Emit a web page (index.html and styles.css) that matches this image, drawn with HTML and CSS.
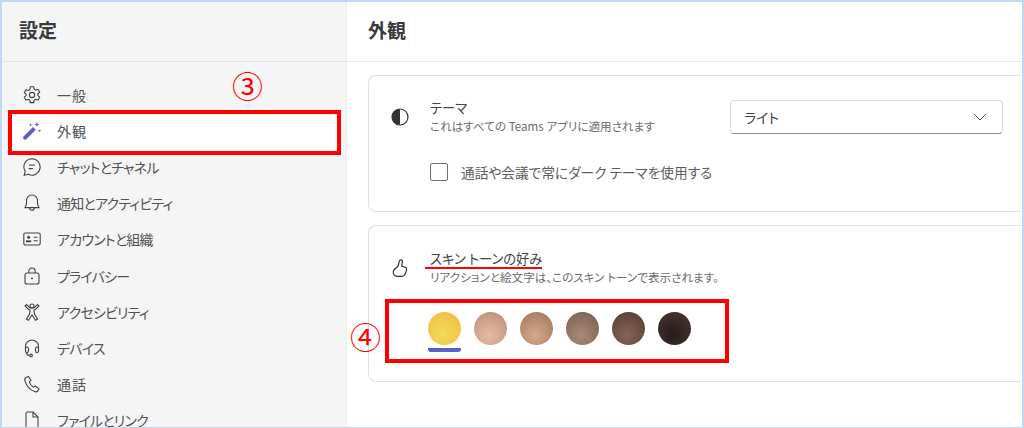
FILE: index.html
```html
<!DOCTYPE html>
<html lang="ja">
<head>
  <meta charset="UTF-8">
  <title>設定</title>
  <link rel="stylesheet" href="styles.css">
</head>
<body>
  <div class="window">
    <aside class="sidebar">
      <div class="sidebar-head">設定</div>
      <nav class="nav">
        <div class="nav-item">
          <svg class="icon" viewBox="0 0 20 20"><path d="M8.300 1.800h3.400l.5 2.400 1.500.9 2.300-.8 1.700 2.900-1.800 1.600v1.800l1.800 1.600-1.700 2.900-2.300-.8-1.500.9-.5 2.400H8.300l-.5-2.400-1.500-.9-2.300.8-1.700-2.900 1.800-1.600V9.200L2.300 7.600 4 4.700l2.300.8 1.500-.9z"/><circle cx="10" cy="10" r="2.600"/></svg>
          <span class="wide">一般</span>
        </div>
        <div class="nav-item nav-item-active">
          <svg class="icon" viewBox="0 0 20 20"><path class="wand" d="M1.500 15.500 11 6l2.800 2.800-9.500 9.500a2 2 0 0 1-2.800-2.800z"/><path class="spark" d="M14.800 1l.7 1.800 1.800.7-1.800.7-.7 1.800-.7-1.800-1.800-.7 1.800-.7zM17.600 8.200l.5 1.100 1.100.5-1.100.5-.5 1.100-.5-1.100-1.100-.5 1.100-.5zM8.600 2.400l.5 1.100 1.100.5-1.100.5-.5 1.100-.5-1.100L7 4l1.100-.5z"/></svg>
          <span class="wide">外観</span>
        </div>
        <div class="nav-item">
          <svg class="icon" viewBox="0 0 20 20"><path d="M10 1.800a8.200 8.200 0 1 1-3.800 15.500l-4 .9 1-3.800A8.200 8.200 0 0 1 10 1.800z"/><path d="M6.800 8h6.400M6.800 11.600h4"/></svg>
          <span>チャットとチャネル</span>
        </div>
        <div class="nav-item">
          <svg class="icon" viewBox="0 0 20 20"><path d="M10 2a5.500 5.500 0 0 0-5.500 5.500v3.500L3 14.600h14L15.500 11V7.500A5.500 5.500 0 0 0 10 2z"/><path d="M7.600 14.800a2.400 2.400 0 0 0 4.800 0"/></svg>
          <span>通知とアクティビティ</span>
        </div>
        <div class="nav-item">
          <svg class="icon" viewBox="0 0 20 20"><rect x="1.800" y="4" width="16.400" height="12" rx="1.600"/><circle class="fill" cx="6.600" cy="8.200" r="1.500"/><path class="fill" d="M4 11.400h5.200v1.800H4z"/><path d="M11.600 8.200h4M11.600 11.800h4"/></svg>
          <span>アカウントと組織</span>
        </div>
        <div class="nav-item">
          <svg class="icon" viewBox="0 0 20 20"><rect x="3" y="7" width="14" height="11" rx="2"/><path d="M6.800 7V5.200a3.200 3.200 0 0 1 6.400 0V7"/><circle class="fill" cx="10" cy="12.500" r="1"/></svg>
          <span>プライバシー</span>
        </div>
        <div class="nav-item">
          <svg class="icon" viewBox="0 0 20 20"><circle cx="10" cy="4" r="2"/><path d="M3 3.800c1.500 2 3.500 3.600 5 4.200l-.5 4-3 5 2 1.200L10 13l3.500 5.200 2-1.200-3-5-.5-4c1.500-.6 3.500-2.200 5-4.200l-1.600-1.200C14 4.400 12 6 10 6S6 4.400 4.600 2.600z"/></svg>
          <span>アクセシビリティ</span>
        </div>
        <div class="nav-item">
          <svg class="icon" viewBox="0 0 20 20"><path d="M3.500 11V8.500a6.500 6.500 0 0 1 13 0V11"/><rect x="3.500" y="9" width="3" height="5.600" rx="1.500"/><rect x="13.500" y="9" width="3" height="5.600" rx="1.500"/><path d="M4.500 14.600c0 2.200 1.200 3 3 3"/><circle cx="9" cy="17.400" r="1.300"/></svg>
          <span>デバイス</span>
        </div>
        <div class="nav-item">
          <svg class="icon" viewBox="0 0 20 20"><path d="M6.400 2.400 4 3.400C2.800 4 2.600 5.400 3 6.800c1.400 5 5 9 9.800 10.800 1.400.5 2.600 0 3.200-1l1-1.800-3.600-2.800-2 1.200C9.600 12.200 8 10 7.400 7.800l1.600-1.600z"/></svg>
          <span class="wide">通話</span>
        </div>
        <div class="nav-item">
          <svg class="icon" viewBox="0 0 20 20"><path d="M4 18V3.500A1.500 1.500 0 0 1 5.500 2H11l5 5v11A1.500 1.500 0 0 1 14.500 19.500h-9A1.500 1.500 0 0 1 4 18z"/><path d="M11 2v5h5"/></svg>
          <span>ファイルとリンク</span>
        </div>
      </nav>
    </aside>

    <main class="main">
      <div class="main-head">外観</div>
      <div class="cards">
        <section class="card card-theme">
          <div class="card-row">
            <svg class="card-icon" viewBox="0 0 20 20"><circle class="plain" cx="10" cy="10" r="8"/><path class="solid" d="M10 2a8 8 0 0 0 0 16z"/></svg>
            <div class="card-text">
              <div class="card-title">テーマ</div>
              <div class="card-sub">これはすべての Teams アプリに適用されます</div>
            </div>
            <div class="select">
              <span>ライト</span>
              <svg class="chevron" viewBox="0 0 14 8"><path d="M1 1l6 6 6-6"/></svg>
            </div>
          </div>
          <label class="check-row">
            <span class="checkbox"></span>
            <span>通話や会議で常にダーク テーマを使用する</span>
          </label>
        </section>

        <section class="card card-skin">
          <div class="card-row">
            <svg class="card-icon" viewBox="0 0 20 20"><path class="plain" d="M11.200 1.800c1 0 1.400 1 1.200 2.200l-.7 4 3.300 1.200c1.400.5 2 1.800 1.500 3.200l-1 3c-.7 2-2.300 3-4.500 3H8c-2.800 0-4.800-1.800-4.800-4.200 0-1.400.6-2.400 1.800-3.400l2.200-1.800c.8-.8 1.200-1.600 1.500-3l.5-2.400c.2-1.200 1-1.800 2-1.800z"/></svg>
            <div class="card-text">
              <div class="card-title">スキン トーンの好み</div>
              <div class="card-sub">リアクションと絵文字は、このスキン トーンで表示されます。</div>
            </div>
          </div>
          <div class="swatches">
            <div class="swatch swatch-on"><span class="tone tone-1"></span></div>
            <div class="swatch"><span class="tone tone-2"></span></div>
            <div class="swatch"><span class="tone tone-3"></span></div>
            <div class="swatch"><span class="tone tone-4"></span></div>
            <div class="swatch"><span class="tone tone-5"></span></div>
            <div class="swatch"><span class="tone tone-6"></span></div>
          </div>
        </section>
      </div>
    </main>

    <!-- red annotations drawn over the screenshot -->
    <div class="mark mark-nav"></div>
    <div class="mark mark-tones"></div>
    <div class="mark-line"></div>
    <div class="step step-3">③</div>
    <div class="step step-4">④</div>
  </div>
</body>
</html>
```

FILE: styles.css
```css
* {
  box-sizing: border-box;
}

body {
  margin: 0;
  background-color: #fff;
  font-family: "Noto Sans CJK JP", "Noto Sans", sans-serif;
  font-feature-settings: "palt";
  color: #424242;
}

.window {
  position: relative;
  display: flex;
  width: 1024px;
  height: 428px;
  overflow: hidden;
  border: 2px solid #bcd9f6;
  border-bottom-width: 1px;
}

/* sidebar */
.sidebar {
  flex: none;
  width: 345px;
  background-color: #f5f5f5;
  border-right: 1px solid #ededed;
}

.sidebar-head {
  height: 60px;
  padding: 14px 0 0 17px;
  font-size: 19px;
  line-height: 28px;
  font-weight: 700;
  color: #3a3a3a;
  border-bottom: 1px solid #e4e4e4;
}

.nav {
  padding-top: 15px;
}

.nav-item {
  display: flex;
  align-items: center;
  height: 36.100px;
  padding-left: 20px;
  font-size: 14px;
  letter-spacing: -0.8px;
  color: #525252;
}

.nav-item span {
  margin-left: 15px;
}

.nav-item .wide {
  letter-spacing: 1px;
}

.nav-item-active {
  position: relative;
  z-index: 1;
}

.icon {
  flex: none;
  width: 20px;
  height: 20px;
  fill: none;
  stroke: #424242;
  stroke-width: 1.100;
}

.icon .fill {
  fill: #424242;
  stroke: none;
}

.icon .wand {
  fill: #5b5fc7;
  stroke: none;
}

.icon .spark {
  fill: #5b5fc7;
  stroke: none;
}

/* main */
.main {
  flex: 1;
  min-width: 0;
  background-color: #fff;
}

.main-head {
  height: 60px;
  padding: 14px 0 0 21px;
  font-size: 19px;
  line-height: 28px;
  font-weight: 700;
  color: #3a3a3a;
  border-bottom: 1px solid #e8e8e8;
}

.cards {
  display: flex;
  flex-direction: column;
  gap: 13px;
  padding: 13px 0 0 21px;
}

.card {
  border: 1px solid #e0e0e0;
  border-right: none;
  border-radius: 8px 0 0 8px;
  background-color: #fff;
}

.card-theme {
  height: 137px;
  padding: 22px 0 0 21px;
}

.card-skin {
  height: 157px;
  padding: 23px 0 0 21px;
}

.card-row {
  display: flex;
  align-items: center;
}

.card-icon {
  flex: none;
  width: 20px;
  height: 20px;
}

.card-icon .plain {
  fill: none;
  stroke: #333;
  stroke-width: 1.200;
}

.card-icon .solid {
  fill: #333;
}

.card-text {
  width: 300px;
  margin-left: 20px;
  flex: none;
}

.card-title {
  font-size: 13.300px;
  line-height: 19px;
  color: #424242;
}

.card-sub {
  font-size: 11.600px;
  line-height: 19px;
  color: #6b6b6b;
  white-space: nowrap;
}

.select {
  display: flex;
  align-items: center;
  justify-content: space-between;
  flex: none;
  width: 273px;
  height: 34px;
  padding: 0 15px 0 13px;
  font-size: 14px;
  border: 1px solid #dedede;
  border-bottom: 1px solid #8f8f8f;
  border-radius: 4px;
}

.chevron {
  width: 14px;
  height: 8px;
  fill: none;
  stroke: #555;
  stroke-width: 1;
}

.check-row {
  display: flex;
  align-items: center;
  margin: 26px 0 0 40px;
  font-size: 13.700px;
  color: #5c5c5c;
}

.checkbox {
  flex: none;
  width: 18px;
  height: 18px;
  margin-right: 13px;
  border: 1px solid #707070;
  border-radius: 2px;
}

.swatches {
  display: flex;
  gap: 13px;
  margin: 25px 0 0 38px;
}

.swatch {
  width: 33px;
  height: 40px;
}

.swatch-on {
  border-bottom: 4px solid #5b5fc7;
  border-radius: 0 0 3px 3px;
}

.tone {
  display: block;
  width: 33px;
  height: 33px;
  border-radius: 50%;
}

.tone-1 { background: radial-gradient(circle at 45% 65%, #f3da58, #f0b93f); }
.tone-2 { background: radial-gradient(circle at 45% 70%, #e6bca5, #b58a72); }
.tone-3 { background: radial-gradient(circle at 45% 70%, #d4a988, #9b7459); }
.tone-4 { background: radial-gradient(circle at 45% 70%, #a88a74, #755a50); }
.tone-5 { background: radial-gradient(circle at 45% 70%, #856457, #52382f); }
.tone-6 { background: radial-gradient(circle at 45% 65%, #271b1e, #4b3a30); }

/* annotations */
.mark {
  position: absolute;
  border: 4px solid #f00;
}

.mark-nav {
  left: 6px;
  top: 108px;
  width: 333px;
  height: 45px;
  background-color: #fff;
}

.mark-tones {
  left: 383px;
  top: 297px;
  width: 344px;
  height: 64px;
}

.mark-line {
  position: absolute;
  left: 423px;
  top: 265px;
  width: 117px;
  height: 2px;
  background-color: #f00;
}

.step {
  position: absolute;
  font-size: 31px;
  line-height: 32px;
  color: #f00;
}

.step-3 {
  left: 230px;
  top: 67px;
}

.step-4 {
  left: 348px;
  top: 318px;
}
```
